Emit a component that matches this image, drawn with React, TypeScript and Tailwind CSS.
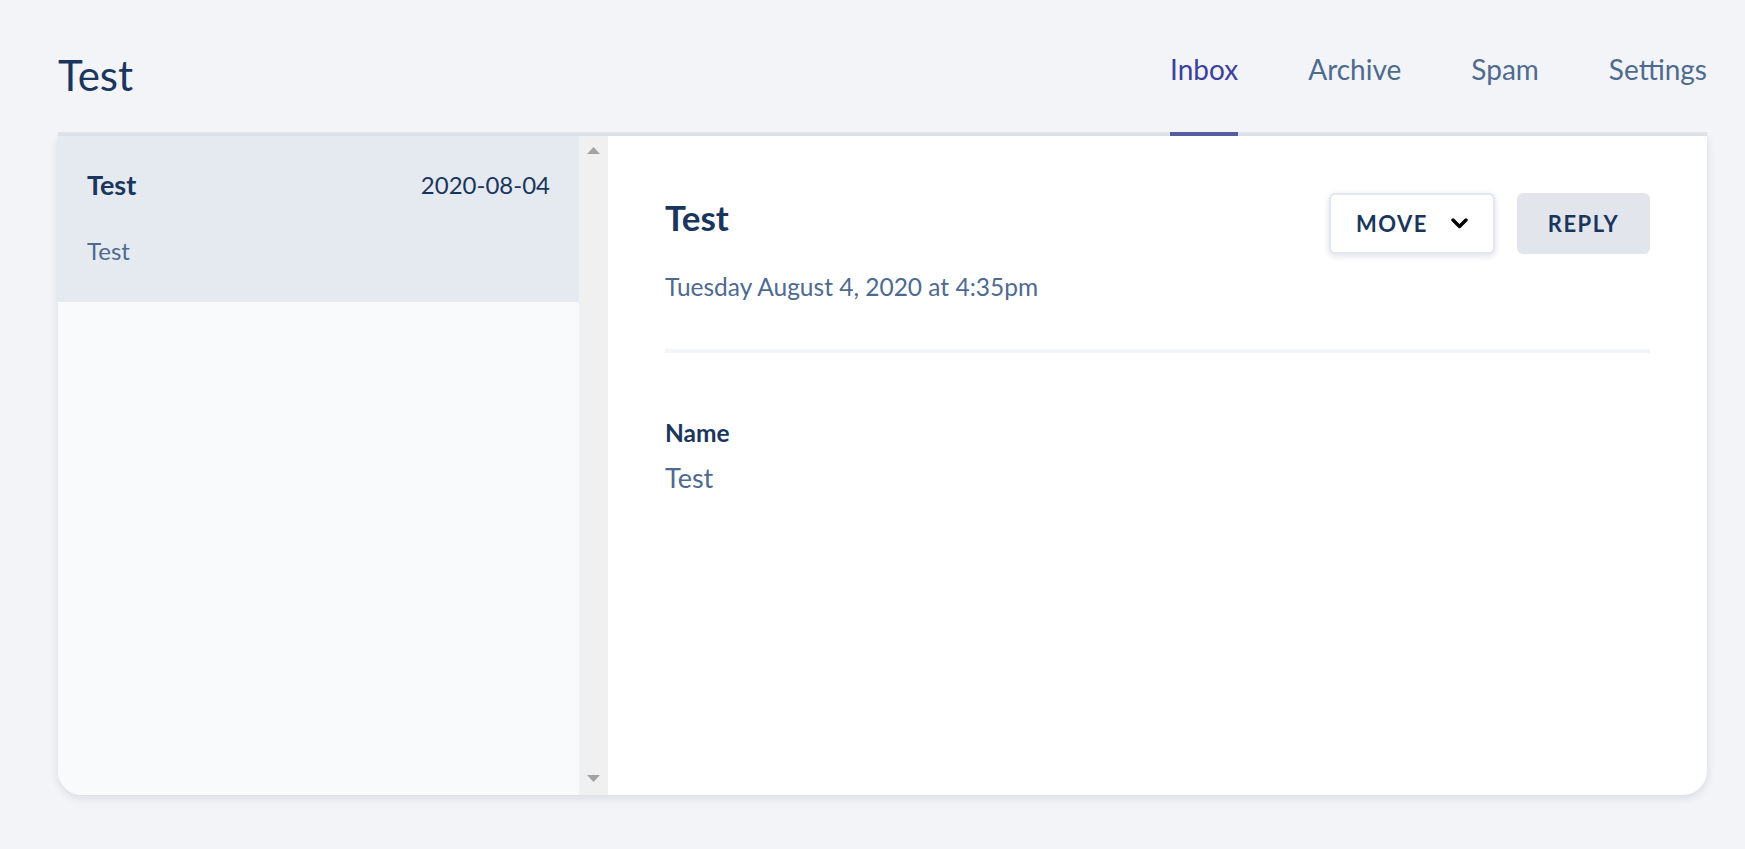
const TABS = ["Inbox", "Archive", "Spam", "Settings"];

function ScrollArrow({ down }: { down?: boolean }) {
  return (
    <svg width="13" height="7" viewBox="0 0 13 7" className="block">
      <polygon points={down ? "0,0 13,0 6.5,7" : "0,7 13,7 6.5,0"} fill="#a3a3a3" />
    </svg>
  );
}

function Chevron() {
  return (
    <svg width="17" height="11" viewBox="0 0 17 11" fill="none" className="block">
      <polyline points="2,2 8.5,8.5 15,2" stroke="#000" strokeWidth="3.4" strokeLinecap="round" strokeLinejoin="round" />
    </svg>
  );
}

export default function App() {
  const font = { fontFamily: "Lato, 'Open Sans', sans-serif" };

  return (
    <div className="min-h-[849px] bg-[#f3f4f8] pl-[58px] pr-[38px] pb-[54px]" style={font}>
      {/* Header + tabs */}
      <div className="flex h-[136px] justify-between border-b-4 border-[#e1e4eb]">
        <div className="flex items-center pt-[18px] text-[42px] leading-none text-[#1b365d]">Test</div>
        <nav className="flex gap-[70px]">
          {TABS.map((t, i) => (
            <a
              key={t}
              className={`-mb-1 flex items-center border-b-4 pt-[6px] text-[28px] leading-none ${
                i === 0 ? "border-[#535c9c] text-[#3d409c]" : "border-transparent text-[#4f6a8f]"
              }`}
            >
              {t}
            </a>
          ))}
        </nav>
      </div>

      {/* Card */}
      <div className="flex h-[659px] overflow-hidden rounded-b-3xl bg-white shadow-[0_3px_8px_rgba(30,40,70,0.12)]">
        {/* Message list */}
        <div className="w-[521px] bg-[#f9fafc]">
          <div className="h-[166px] bg-[#e5eaf1] px-[29px]">
            <div className="flex items-center justify-between pt-[35px] text-[#1b365d]">
              <span className="text-[27px] font-bold leading-[28px]">Test</span>
              <span className="text-[24px] leading-[28px]">2020-08-04</span>
            </div>
            <div className="pt-[39px] text-[24px] leading-[26px] text-[#4f6a8f]">Test</div>
          </div>
        </div>

        {/* Scrollbar */}
        <div className="flex w-[29px] flex-col items-center justify-between bg-[#f0f0f0] pt-[11px] pb-[13px]">
          <ScrollArrow />
          <ScrollArrow down />
        </div>

        {/* Message detail */}
        <div className="flex-1 px-[57px] pt-[61px]">
          <div className="flex items-start justify-between">
            <div>
              <h1 className="text-[35px] font-bold leading-[40px] text-[#1b365d]">Test</h1>
              <p className="mt-[35px] text-[24.5px] leading-[30px] text-[#4f6a8f]">Tuesday August 4, 2020 at 4:35pm</p>
            </div>
            <div className="-mt-[4px] flex gap-[22px]">
              <button className="flex h-[61px] w-[166px] items-center justify-center gap-[23px] rounded-md border-2 border-[#e3e6ee] bg-white text-[22px] font-bold tracking-[1.5px] text-[#1b365d] shadow-[0_2px_6px_rgba(30,40,70,0.15)]">
                MOVE
                <Chevron />
              </button>
              <button className="flex h-[61px] w-[133px] items-center justify-center rounded-md bg-[#e2e5ec] text-[22px] font-bold tracking-[1.5px] text-[#1b365d]">
                REPLY
              </button>
            </div>
          </div>

          <div className="mt-[47px] h-[4px] bg-[#f3f5fa]" />

          <div className="mt-[65px]">
            <div className="text-[24.5px] font-bold leading-[30px] text-[#1b365d]">Name</div>
            <div className="mt-[14px] text-[27px] leading-[32px] text-[#4f6a8f]">Test</div>
          </div>
        </div>
      </div>
    </div>
  );
}
